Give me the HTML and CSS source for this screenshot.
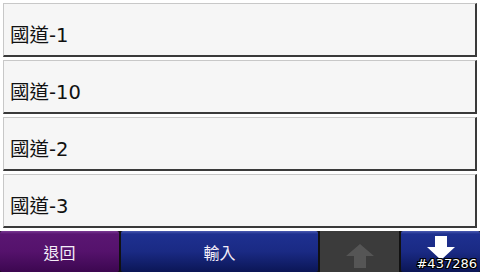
FILE: index.html
```html
<!DOCTYPE html>
<html>
<head>
<meta charset="utf-8">
<link rel="stylesheet" href="styles.css">
</head>
<body>
<div class="screen">
  <div class="list">
    <div class="row">國道-1</div>
    <div class="row">國道-10</div>
    <div class="row">國道-2</div>
    <div class="row">國道-3</div>
  </div>
  <div class="bar">
    <div class="btn purple back">退回</div>
    <div class="btn blue enter">輸入</div>
    <div class="btn gray arrow">
      <svg width="30" height="24" viewBox="0 0 30 24"><path d="M15 0 L29 12 L21 12 L21 24 L9 24 L9 12 L1 12 Z" fill="#555"/></svg>
    </div>
    <div class="btn blue arrow down">
      <svg width="28" height="24" viewBox="0 0 28 24"><path d="M8 0 L20 0 L20 11 L28 11 L14 24 L0 11 L8 11 Z" fill="#fff"/></svg>
    </div>
    <div class="tag">#437286</div>
  </div>
</div>
</body>
</html>
```
FILE: styles.css
```css
html, body {
  margin: 0;
  padding: 0;
  background: #fff;
}
.screen {
  width: 480px;
  height: 272px;
  position: relative;
  overflow: hidden;
  display: flex;
  flex-direction: column;
}
.list {
  display: flex;
  flex-direction: column;
  gap: 3px;
  padding: 3px 3px 0 3px;
  height: 225px;
}
.row {
  box-sizing: content-box;
  background: #f6f6f6;
  border-top: 1px solid #c8c8c8;
  border-left: 1px solid #c8c8c8;
  border-right: 2px solid #3a3a3a;
  border-bottom: 2px solid #3a3a3a;
  display: flex;
  align-items: center;
  padding: 7px 0 0 6px;
  height: 44px;
  font-family: "DejaVu Sans", "Noto Sans CJK TC", sans-serif;
  font-size: 19.5px;
  color: #111;
}
.bar {
  margin-top: 3px;
  display: flex;
  height: 41px;
  background: #111;
  gap: 2px;
}
.btn {
  display: flex;
  align-items: center;
  justify-content: center;
  font-family: "Noto Sans CJK TC", sans-serif;
  font-size: 16px;
  color: #f4eef8;
  border-radius: 2px;
}
.back { width: 119px; }
.enter { width: 197px; }
.arrow { width: 79px; }
.down { flex: 1; align-items: flex-start; padding-top: 5px; }
.gray { padding-top: 8px; box-sizing: border-box; }
.purple {
  background: linear-gradient(#7a3a94 0px, #5a1672 3px, #55126c 50%, #3c0750 100%);
}
.blue {
  background: linear-gradient(#4a5ab0 0px, #1e3090 3px, #1a2a84 50%, #0b1656 100%);
}
.gray {
  background: #3b3b3b;
  border-radius: 0;
}
.tag {
  position: absolute;
  right: 3px;
  bottom: 1px;
  font-family: "DejaVu Sans", sans-serif;
  font-size: 13px;
  color: #fff;
  text-shadow: -1px 0 #000, 1px 0 #000, 0 -1px #000, 0 1px #000, 1px 1px #000, -1px -1px #000, 1px -1px #000, -1px 1px #000;
}
```
